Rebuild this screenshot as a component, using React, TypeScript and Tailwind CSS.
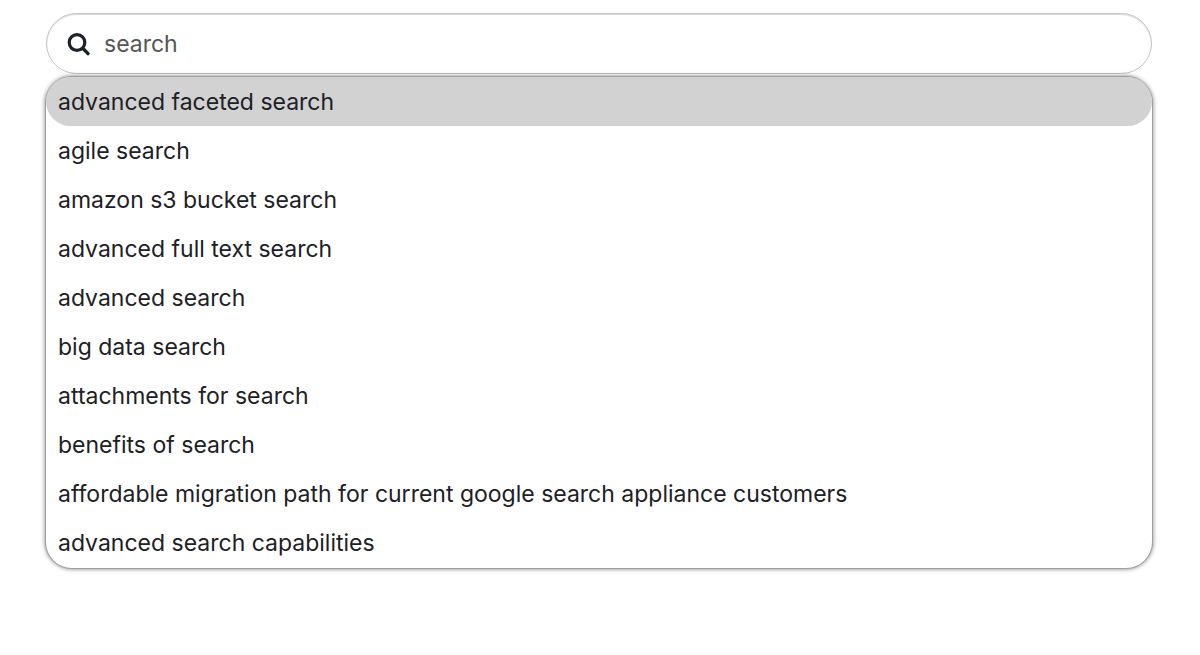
import React, { useState } from "react";

const suggestions = [
  "advanced faceted search",
  "agile search",
  "amazon s3 bucket search",
  "advanced full text search",
  "advanced search",
  "big data search",
  "attachments for search",
  "benefits of search",
  "affordable migration path for current google search appliance customers",
  "advanced search capabilities",
];

const SearchIcon = () => (
  <svg
    viewBox="0 0 24 24"
    fill="none"
    stroke="currentColor"
    strokeLinecap="round"
    className="size-6 shrink-0"
    aria-hidden="true"
  >
    <circle cx="10" cy="10.5" r="7.8" strokeWidth="3.2" />
    <path d="M16 16.5L21 21.6" strokeWidth="3.4" />
  </svg>
);

const App = () => {
  const [query, setQuery] = useState("search");
  const [active, setActive] = useState(0);

  return (
    <div className="pt-[13px] pr-12 pb-20 pl-[46px] font-['Inter',sans-serif] text-[23px] text-[#1d2025]">
      <form role="search" onSubmit={(e) => e.preventDefault()}>
        <label
          htmlFor="query"
          className="flex h-[61px] items-center gap-3 rounded-full border border-[#c4c4c4] bg-white px-5 shadow-[inset_0_1px_1px_rgba(0,0,0,0.15)]"
        >
          <SearchIcon />
          <input
            type="text"
            id="query"
            aria-label="Search"
            autoComplete="off"
            value={query}
            onChange={(e) => setQuery(e.target.value)}
            className="min-w-0 flex-1 pt-0.5 pl-px text-[#555] outline-none"
          />
        </label>
      </form>
      <ul className="mt-[3px] rounded-[26px] bg-white pb-px shadow-[0_0_0_1px_#a0a0a0,0_0_4px_1px_rgba(0,0,0,0.5)]">
        {suggestions.map((text, i) => (
          <li key={text}>
            <button
              type="button"
              onMouseEnter={() => setActive(i)}
              onClick={() => setQuery(text)}
              className={`block h-[49px] w-full rounded-full px-3 pt-0.5 text-left ${
                i === active ? "bg-[#d2d2d2]" : ""
              }`}
            >
              {text}
            </button>
          </li>
        ))}
      </ul>
    </div>
  );
};

export default App;
